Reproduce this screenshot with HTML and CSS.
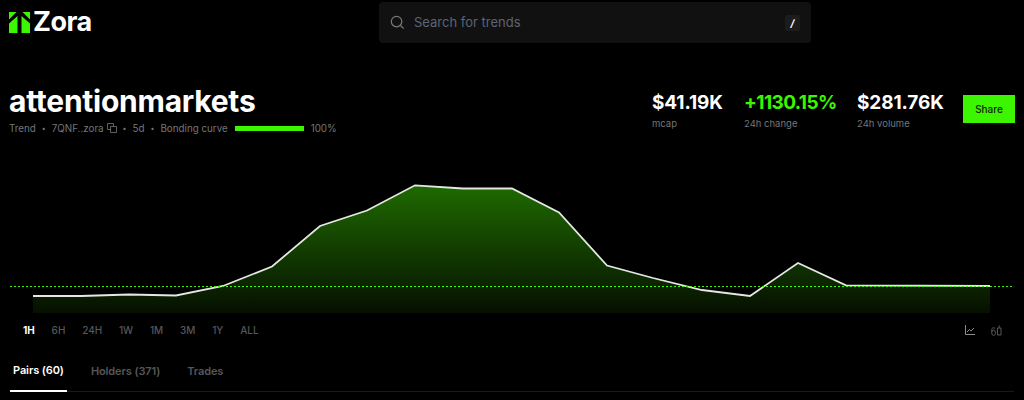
FILE: index.html
```html
<!DOCTYPE html>
<html lang="en">
<head>
<meta charset="utf-8">
<title>attentionmarkets</title>
<link rel="stylesheet" href="styles.css">
</head>
<body>
<header class="topbar">
  <div class="brand">
    <svg class="mark" viewBox="0 0 21 21" width="21" height="21" aria-hidden="true">
      <path fill="#3cf500" d="M0 0H7.5L0 7.5ZM13.5 0H21V7.5ZM0 11.5L8.5 4V21H0ZM21 11.5L12.5 4V21H21Z"/>
    </svg>
    <span class="wordmark">Zora</span>
  </div>
  <div class="search">
    <svg class="search-icon" viewBox="0 0 16 16" width="15" height="15" aria-hidden="true">
      <circle cx="7" cy="7" r="5.6" fill="none" stroke="#77797c" stroke-width="1.3"/>
      <path d="M11.2 11.2L14.6 14.6" stroke="#77797c" stroke-width="1.3" fill="none"/>
    </svg>
    <span class="search-text">Search for trends</span>
    <span class="kbd">/</span>
  </div>
</header>

<section class="summary">
  <div class="identity">
    <h1 class="title">attentionmarkets</h1>
    <div class="meta">
      <span>Trend</span><span class="dot">•</span>
      <span>7QNF..zora</span>
      <svg class="copy" viewBox="0 0 10 10" width="10" height="10" aria-hidden="true">
        <path d="M3.5 3.5H9.5V9.5H3.5ZM6.5 3.5V.5H.5V6.5H3.5" fill="none" stroke="#77797c" stroke-width=".8"/>
      </svg>
      <span class="dot">•</span><span>5d</span><span class="dot">•</span>
      <span>Bonding curve</span>
      <span class="bar"></span>
      <span class="pct">100%</span>
    </div>
  </div>
  <div class="stats">
    <div class="stat stat-mcap"><strong>$41.19K</strong><span>mcap</span></div>
    <div class="stat stat-change"><strong class="up">+1130.15%</strong><span>24h change</span></div>
    <div class="stat stat-volume"><strong>$281.76K</strong><span>24h volume</span></div>
    <button class="share" type="button">Share</button>
  </div>
</section>

<svg class="chart" viewBox="0 0 1024 170" width="1024" height="170" aria-hidden="true">
  <defs>
    <linearGradient id="area" x1="0" y1="0" x2="0" y2="1">
      <stop offset="0" stop-color="#1f6a00"/>
      <stop offset="1" stop-color="#061000"/>
    </linearGradient>
  </defs>
  <g transform="translate(0,-150)">
    <path fill="url(#area)" d="M33 296L81 296L129 294.5L176 295.5L223 286L272 266.5L320 226L367 210.5L415 185.3L463 188.5L512 188.5L559 212.5L607 265.5L653 278L702 290L750 296L798 263L846 285.3L990 286V313H33Z"/>
    <path fill="none" stroke="#e4e7e3" stroke-width="1.8" d="M33 296L81 296L129 294.5L176 295.5L223 286L272 266.5L320 226L367 210.5L415 185.3L463 188.5L512 188.5L559 212.5L607 265.5L653 278L702 290L750 296L798 263L846 285.3L990 286"/>
    <path fill="none" stroke="#3cf500" stroke-width="1" stroke-dasharray="2 2" d="M10 286.5H1014"/>
  </g>
</svg>

<div class="ranges">
  <div class="range-list">
    <span class="range active">1H</span>
    <span class="range">6H</span>
    <span class="range">24H</span>
    <span class="range">1W</span>
    <span class="range">1M</span>
    <span class="range">3M</span>
    <span class="range">1Y</span>
    <span class="range">ALL</span>
  </div>
  <div class="chart-tools">
    <svg viewBox="0 0 10 10" width="10" height="10" aria-hidden="true">
      <path d="M.5 0V9.5H10M2 7L4.5 4.5L6 6L9 3" fill="none" stroke="#8a8c8e" stroke-width="1"/>
    </svg>
    <svg viewBox="0 0 11 11" width="11" height="11" aria-hidden="true">
      <path d="M4 3.5A1.8 1.8 0 0 0 .8 5V8.5A1.8 1.8 0 0 0 4.4 8.5V7A1.8 1.8 0 0 0 .8 7M6.5 3H10V10H6.5ZM8.2 .5V3" fill="none" stroke="#55575a" stroke-width="1"/>
    </svg>
  </div>
</div>

<nav class="tabs">
  <span class="tab active">Pairs (60)</span>
  <span class="tab">Holders (371)</span>
  <span class="tab">Trades</span>
</nav>
</body>
</html>
```

FILE: styles.css
```css
* { box-sizing: border-box; }
html, body { margin: 0; padding: 0; }
body {
  width: 1024px;
  height: 400px;
  overflow: hidden;
  background: #000;
  color: #fff;
  font-family: Inter, "Liberation Sans", sans-serif;
}
.topbar {
  display: flex;
  height: 80px;
  padding: 2px 0 0 9px;
  align-items: flex-start;
}
.brand {
  display: flex;
  align-items: center;
  gap: 3px;
  width: 370px;
  height: 41px;
}
.mark { display: block; }
.wordmark {
  font-size: 27px;
  font-weight: 700;
  letter-spacing: -0.5px;
  line-height: 1;
  margin-top: -2px;
}
.search {
  display: flex;
  align-items: center;
  width: 432px;
  height: 41px;
  padding: 0 11px 0 11px;
  background: #111111;
  border-radius: 4px;
}
.search-text {
  flex: 1;
  margin-left: 9px;
  margin-top: -2px;
  font-size: 13px;
  color: #5c6475;
}
.kbd {
  display: flex;
  align-items: center;
  justify-content: center;
  width: 15px;
  height: 16px;
  background: #1c1c1c;
  border-radius: 2px;
  font-size: 10px;
  font-weight: 700;
  font-style: italic;
}
.summary {
  display: flex;
  justify-content: space-between;
  align-items: flex-start;
  height: 70px;
  padding: 0 9px 0 9px;
}
.title {
  margin: 1px 0 0;
  font-size: 30px;
  font-weight: 700;
  line-height: 40px;
  letter-spacing: -0.25px;
}
.meta {
  display: flex;
  align-items: center;
  height: 14px;
  font-size: 9.8px;
  color: #73767a;
}
.dot { margin: 0 6px; font-size: 7px; }
.copy { margin-left: 3px; }
.bar {
  width: 69px;
  height: 5px;
  margin: 0 7px;
  background: #3cf500;
}
.stats {
  display: flex;
  align-items: flex-start;
  margin-top: 9px;
}
.stat {
  display: flex;
  flex-direction: column;
}
.stat strong {
  font-size: 19px;
  font-weight: 700;
  line-height: 28px;
  letter-spacing: -0.1px;
}
.stat strong.up { letter-spacing: -0.6px; }
.stat span {
  font-size: 9.5px;
  line-height: 13px;
  color: #73767a;
}
.stat-mcap { width: 92px; }
.stat-change { width: 113px; }
.stat-volume { width: 106px; }
.up { color: #3cf500; }
.share {
  width: 52px;
  height: 28px;
  margin-top: 6px;
  border: 0;
  padding: 0;
  background: #3cf500;
  color: #0b2400;
  font: 500 10px Inter, "Liberation Sans", sans-serif;
}
.chart { display: block; }
.ranges {
  display: flex;
  justify-content: space-between;
  align-items: center;
  height: 20px;
  padding: 0 22px 0 23px;
}
.range-list { display: flex; gap: 16.8px; }
.range {
  font-size: 10px;
  font-weight: 500;
  color: #55575a;
}
.range.active { color: #fff; font-weight: 700; }
.chart-tools { display: flex; gap: 16px; align-items: center; }
.tabs {
  display: flex;
  height: 42px;
  margin: 10px 10px 0;
  border-bottom: 1px solid #1a1a1a;
  align-items: stretch;
}
.tab {
  display: flex;
  align-items: center;
  padding: 0 3px;
  margin-right: 21px;
  margin-bottom: -1px;
  font-size: 11px;
  font-weight: 600;
  letter-spacing: -0.1px;
  color: #55575a;
}
.tab.active {
  color: #fff;
  border-bottom: 2px solid #fff;
}
```
